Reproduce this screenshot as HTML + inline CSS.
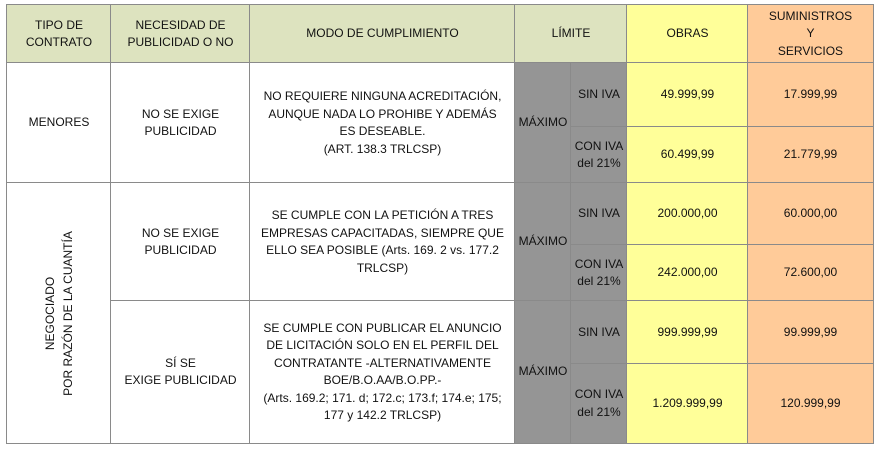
<!DOCTYPE html>
<html><head><meta charset="utf-8"><style>
body{margin:0;width:882px;height:449px;background:#fff;position:relative;overflow:hidden;font-family:"Liberation Sans",sans-serif;font-size:12px;color:#111;}
.c{position:absolute;box-sizing:border-box;border-left:1px solid #8a8a8a;border-top:1px solid #8a8a8a;display:flex;align-items:center;justify-content:center;text-align:center;line-height:17.5px;}
.h{background:#dde3bf}
.y{background:#ffff99}
.o{background:#ffcb99}
.g{background:#959595}
.r{border-right:1px solid #8a8a8a}
.b{border-bottom:1px solid #8a8a8a}
.v{position:absolute;transform:rotate(-90deg);white-space:nowrap;}
</style></head><body>
<!-- header -->
<div class="c h" style="left:6px;top:4px;width:105px;height:59px">TIPO DE<br>CONTRATO</div>
<div class="c h" style="left:110px;top:4px;width:140px;height:59px">NECESIDAD DE<br>PUBLICIDAD O NO</div>
<div class="c h" style="left:249px;top:4px;width:266px;height:59px">MODO DE CUMPLIMIENTO</div>
<div class="c h" style="left:514px;top:4px;width:113px;height:59px">LÍMITE</div>
<div class="c y" style="left:626px;top:4px;width:122px;height:59px">OBRAS</div>
<div class="c o r" style="left:747px;top:4px;width:127px;height:59px">SUMINISTROS<br>Y<br>SERVICIOS</div>

<!-- row 1 -->
<div class="c" style="left:6px;top:62px;width:105px;height:121px">MENORES</div>
<div class="c" style="left:110px;top:62px;width:140px;height:121px">NO SE EXIGE<br>PUBLICIDAD</div>
<div class="c" style="left:249px;top:62px;width:266px;height:121px">NO REQUIERE NINGUNA ACREDITACIÓN,<br>AUNQUE NADA LO PROHIBE Y ADEMÁS<br>ES DESEABLE.<br>(ART. 138.3 TRLCSP)</div>
<div class="c g" style="left:514px;top:62px;width:57px;height:121px">MÁXIMO</div>
<div class="c g" style="left:570px;top:62px;width:57px;height:65px">SIN IVA</div>
<div class="c g" style="left:570px;top:126px;width:57px;height:57px">CON IVA<br>del 21%</div>
<div class="c y" style="left:626px;top:62px;width:122px;height:65px">49.999,99</div>
<div class="c y" style="left:626px;top:126px;width:122px;height:57px">60.499,99</div>
<div class="c o r" style="left:747px;top:62px;width:127px;height:65px">17.999,99</div>
<div class="c o r" style="left:747px;top:126px;width:127px;height:57px">21.779,99</div>

<!-- left merged -->
<div class="c b" style="left:6px;top:182px;width:105px;height:262px"><div class="v">NEGOCIADO<br>POR RAZÓN DE LA CUANTÍA</div></div>

<!-- row 2 -->
<div class="c" style="left:110px;top:182px;width:140px;height:119px">NO SE EXIGE<br>PUBLICIDAD</div>
<div class="c" style="left:249px;top:182px;width:266px;height:119px">SE CUMPLE CON LA PETICIÓN A TRES<br>EMPRESAS CAPACITADAS, SIEMPRE QUE<br>ELLO SEA POSIBLE (Arts. 169. 2 vs. 177.2<br>TRLCSP)</div>
<div class="c g" style="left:514px;top:182px;width:57px;height:119px">MÁXIMO</div>
<div class="c g" style="left:570px;top:182px;width:57px;height:63px">SIN IVA</div>
<div class="c g" style="left:570px;top:244px;width:57px;height:57px">CON IVA<br>del 21%</div>
<div class="c y" style="left:626px;top:182px;width:122px;height:63px">200.000,00</div>
<div class="c y" style="left:626px;top:244px;width:122px;height:57px">242.000,00</div>
<div class="c o r" style="left:747px;top:182px;width:127px;height:63px">60.000,00</div>
<div class="c o r" style="left:747px;top:244px;width:127px;height:57px">72.600,00</div>

<!-- row 3 -->
<div class="c b" style="left:110px;top:300px;width:140px;height:144px">SÍ SE<br>EXIGE PUBLICIDAD</div>
<div class="c b" style="left:249px;top:300px;width:266px;height:144px">SE CUMPLE CON PUBLICAR EL ANUNCIO<br>DE LICITACIÓN SOLO EN EL PERFIL DEL<br>CONTRATANTE -ALTERNATIVAMENTE<br>BOE/B.O.AA/B.O.PP.-<br>(Arts. 169.2; 171. d; 172.c; 173.f; 174.e; 175;<br>177 y 142.2 TRLCSP)</div>
<div class="c g b" style="left:514px;top:300px;width:57px;height:144px">MÁXIMO</div>
<div class="c g" style="left:570px;top:300px;width:57px;height:64px">SIN IVA</div>
<div class="c g b" style="left:570px;top:363px;width:57px;height:81px">CON IVA<br>del 21%</div>
<div class="c y" style="left:626px;top:300px;width:122px;height:64px">999.999,99</div>
<div class="c y b" style="left:626px;top:363px;width:122px;height:81px">1.209.999,99</div>
<div class="c o r" style="left:747px;top:300px;width:127px;height:64px">99.999,99</div>
<div class="c o r b" style="left:747px;top:363px;width:127px;height:81px">120.999,99</div>
</body></html>
